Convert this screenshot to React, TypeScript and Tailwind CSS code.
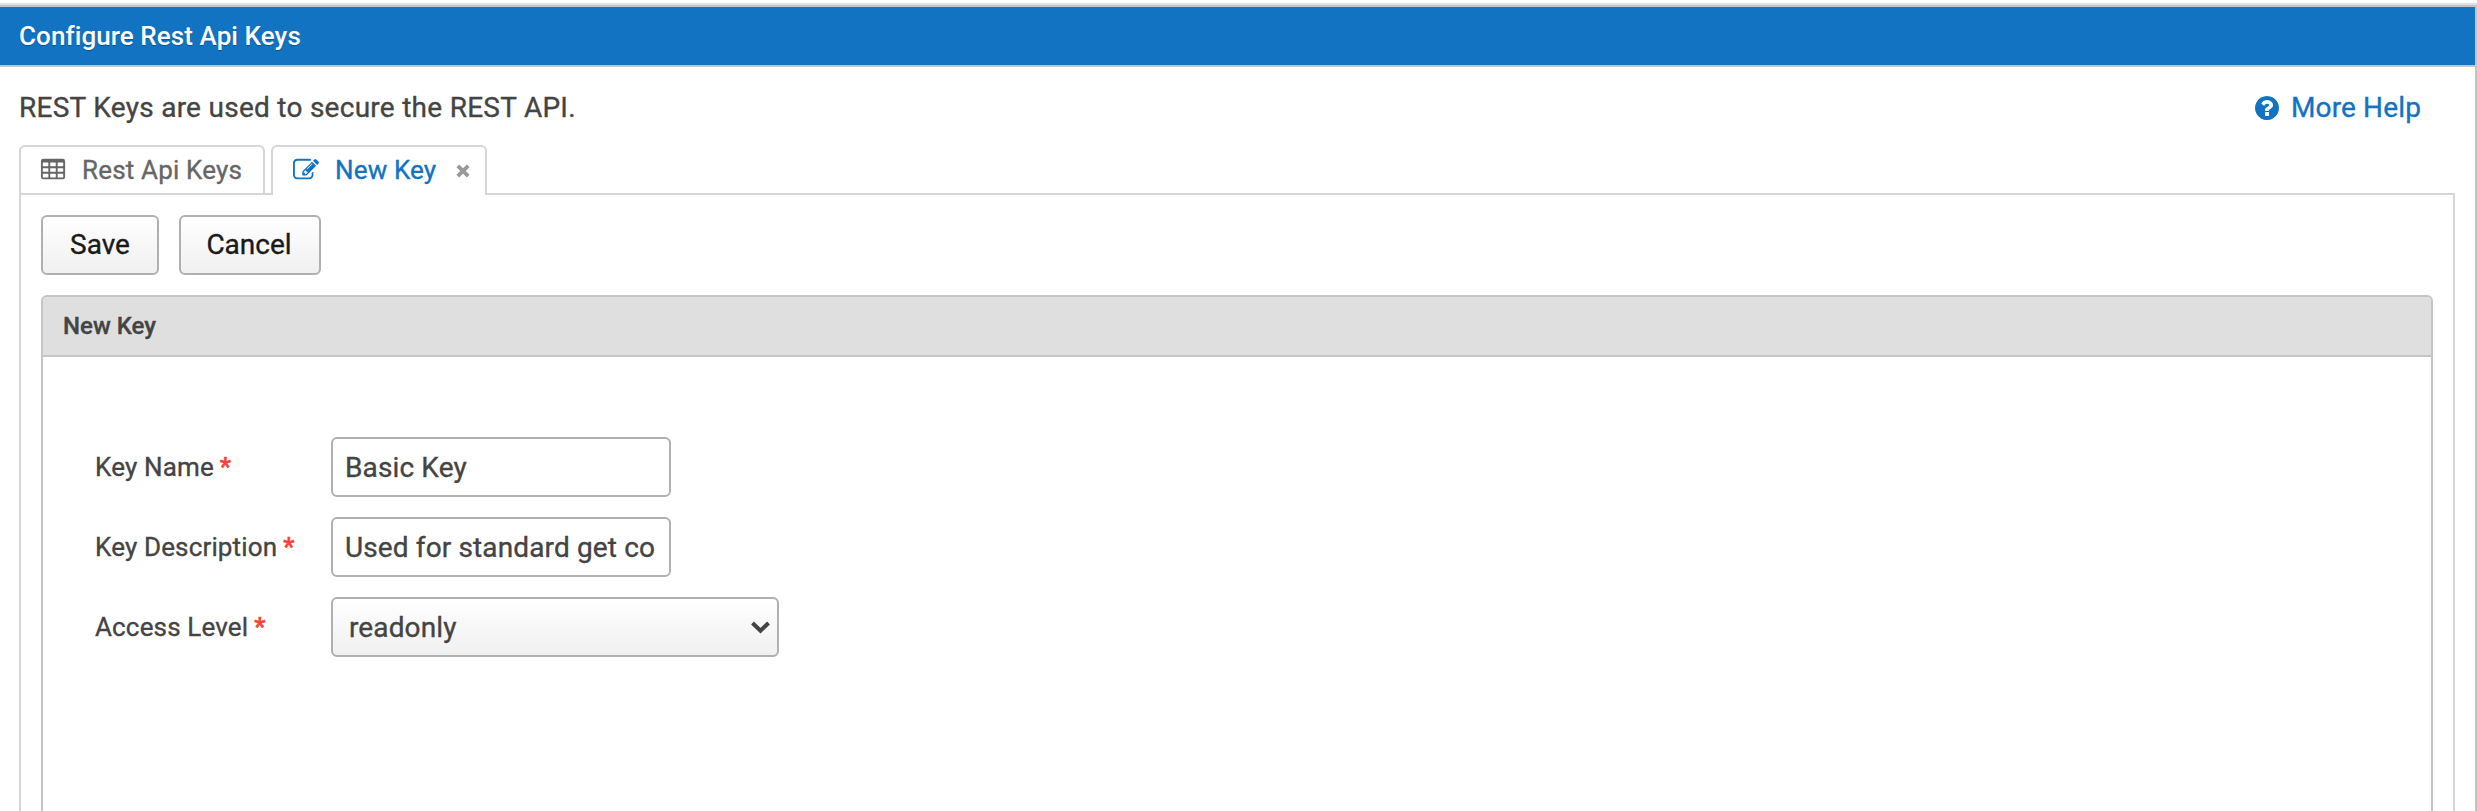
const TABLE =
  'M224 128h1344a160 160 0 0 1 160 160v1088a160 160 0 0 1-160 160h-1344a160 160 0 0 1-160-160v-1088a160 160 0 0 1 160-160zM224 384h320q32 0 32 32v192q0 32-32 32h-320q-32 0-32-32v-192q0-32 32-32zM736 384h320q32 0 32 32v192q0 32-32 32h-320q-32 0-32-32v-192q0-32 32-32zM1248 384h320q32 0 32 32v192q0 32-32 32h-320q-32 0-32-32v-192q0-32 32-32zM224 768h320q32 0 32 32v192q0 32-32 32h-320q-32 0-32-32v-192q0-32 32-32zM736 768h320q32 0 32 32v192q0 32-32 32h-320q-32 0-32-32v-192q0-32 32-32zM1248 768h320q32 0 32 32v192q0 32-32 32h-320q-32 0-32-32v-192q0-32 32-32zM224 1152h320q32 0 32 32v192q0 32-32 32h-320q-32 0-32-32v-192q0-32 32-32zM736 1152h320q32 0 32 32v192q0 32-32 32h-320q-32 0-32-32v-192q0-32 32-32zM1248 1152h320q32 0 32 32v192q0 32-32 32h-320q-32 0-32-32v-192q0-32 32-32z';
const PENCIL =
  'M888 1184l116-116-152-152-116 116v56h96v96h56zm440-720q-16-16-33 1l-350 350q-17 17-1 33t33-1l350-350q17-17 1-33zm80 594v190q0 119-84.5 203.5t-203.5 84.5h-832q-119 0-203.5-84.5t-84.5-203.5v-832q0-119 84.5-203.5t203.5-84.5h832q63 0 117 25 15 7 18 23 3 17-9 29l-49 49q-14 14-32 8-23-6-45-6h-832q-66 0-113 47t-47 113v832q0 66 47 113t113 47h832q66 0 113-47t47-113v-126q0-13 9-22l64-64q15-15 35-7t20 29zm-96-738l288 288-672 672h-288v-288zm444 132l-92 92-288-288 92-92q28-28 68-28t68 28l152 152q28 28 28 68t-28 68z';
const QUESTION =
  'M1024 1376v-192q0-14-9-23t-23-9h-192q-14 0-23 9t-9 23v192q0 14 9 23t23 9h192q14 0 23-9t9-23zm256-672q0-88-55.5-163t-138.5-116-170-41q-243 0-371 213-15 24 8 42l132 100q7 6 19 6 16 0 25-12 53-68 86-92 34-24 86-24 48 0 85.5 26t37.5 59q0 38-20 61t-68 45q-63 28-115.5 86.5t-52.5 125.5v36q0 14 9 23t23 9h192q14 0 23-9t9-23q0-19 21.5-49.5t54.5-49.5q32-18 49-28.5t46-35 44.5-48 28-60.5 12.5-81zm384 192q0 209-103 385.5t-279.5 279.5-385.5 103-385.5-103-279.5-279.5-103-385.5 103-385.5 279.5-279.5 385.5-103 385.5 103 279.5 279.5 103 385.5z';

function Icon({ d, className }: { d: string; className: string }) {
  return (
    <svg viewBox="0 0 1792 1792" className={`shrink-0 overflow-visible fill-current ${className}`} fillRule="evenodd" aria-hidden="true">
      <path d={d} />
    </svg>
  );
}

function Label({ text }: { text: string }) {
  return (
    <div className="flex w-[236px] items-center gap-1.5 text-[26px] tracking-[0.15px]">
      <span>{text}</span>
      <span className="text-[#f44336] [-webkit-text-stroke:0.7px]">*</span>
    </div>
  );
}

const BUTTON =
  'h-[60px] rounded-md border-2 border-[#b0b0b0] bg-gradient-to-b from-white to-[#f0f0f0] text-[28px] text-[#1a1a1a]';
const FIELD = 'h-[60px] rounded-md border-2 border-[#b0b0b0] pt-0.5 text-[28px] tracking-[0.13px]';

export default function App() {
  return (
    <div className="flex h-[811px] w-[2477px] flex-col overflow-hidden bg-white pt-[3px] font-['Roboto',sans-serif] leading-none text-[#444] [-webkit-text-stroke:0.35px]">
      <div className="h-0.5 shrink-0 bg-[#e0e0e0]" />
      <div className="flex min-h-0 flex-1 flex-col border-t-2 border-r-2 border-[#c5c5c5]">
        <header className="flex h-[60px] shrink-0 items-center border-b-2 border-[#c5c5c5] bg-[#1173c2] pl-[19px] text-[26px] font-medium tracking-[0.08px] text-white [text-shadow:0_1px_1px_rgba(0,0,0,0.25)] [-webkit-text-stroke:0]">
          Configure Rest Api Keys
        </header>

        <div className="flex h-[78px] shrink-0 items-center justify-between pt-[3px] pr-[54px] pl-[19px] text-[28px]">
          <p className="tracking-[0.27px]">REST Keys are used to secure the REST API.</p>
          <a className="flex items-center gap-2.5 tracking-[0.13px] text-[#1173c2]">
            <Icon d={QUESTION} className="size-7" />
            <span>More Help</span>
          </a>
        </div>

        <nav className="relative z-10 -mb-0.5 flex h-[50px] shrink-0 items-start gap-1.5 pl-[19px]">
          <div className="flex h-12 w-[246px] items-center rounded-t-md border-2 border-b-0 border-[#d6d6d6] pl-[19px] text-[26px] tracking-[0.17px] text-[#666]">
            <Icon d={TABLE} className="size-[26px]" />
            <span className="ml-4">Rest Api Keys</span>
          </div>
          <div className="flex h-[50px] w-[216px] items-center rounded-t-md border-2 border-b-0 border-[#d6d6d6] bg-white pb-0.5 pl-5 text-[26px] tracking-[0.15px] text-[#1173c2]">
            <Icon d={PENCIL} className="size-[26px]" />
            <span className="ml-4">New Key</span>
            <svg viewBox="0 0 14 14" className="mt-0.5 ml-5 size-3.5 text-[#999]" aria-hidden="true">
              <path d="M1.800 1.800l10.400 10.400M12.200 1.800l-10.400 10.400" stroke="currentColor" strokeWidth="3.8" />
            </svg>
          </div>
        </nav>

        <main className="mr-5 ml-[19px] flex min-h-0 flex-1 flex-col border-2 border-b-0 border-[#d6d6d6] px-5 pt-5">
          <div className="flex gap-5">
            <button className={`${BUTTON} w-[118px]`}>Save</button>
            <button className={`${BUTTON} w-[142px] pr-0.5`}>Cancel</button>
          </div>
          <section className="mt-5 flex min-h-0 flex-1 flex-col rounded-t-md border-2 border-b-0 border-[#c5c5c5]">
            <h2 className="flex h-[60px] shrink-0 items-center rounded-t-sm border-b-2 border-[#c5c5c5] bg-[#dfdfdf] pl-5 text-[24px] font-medium">
              New Key
            </h2>
            <form className="flex flex-col gap-5 pt-20 pl-[52px]">
              <div className="flex items-center">
                <Label text="Key Name" />
                <div className={`${FIELD} flex w-[340px] items-center bg-white px-3`}>Basic Key</div>
              </div>
              <div className="flex items-center">
                <Label text="Key Description" />
                <div className={`${FIELD} flex w-[340px] items-center bg-white px-3 whitespace-nowrap`}>Used for standard get co</div>
              </div>
              <div className="flex items-center">
                <Label text="Access Level" />
                <div className={`${FIELD} flex w-[448px] items-center justify-between bg-gradient-to-b from-white to-[#f0f0f0] pr-[7px] pl-4`}>
                  <span>readonly</span>
                  <svg viewBox="0 0 19 13" className="-mt-0.5 h-[13px] w-[19px]" fill="none" aria-hidden="true">
                    <path d="M1.500 2l8 7.700 8-7.700" stroke="currentColor" strokeWidth="4" />
                  </svg>
                </div>
              </div>
            </form>
          </section>
        </main>
      </div>
    </div>
  );
}
